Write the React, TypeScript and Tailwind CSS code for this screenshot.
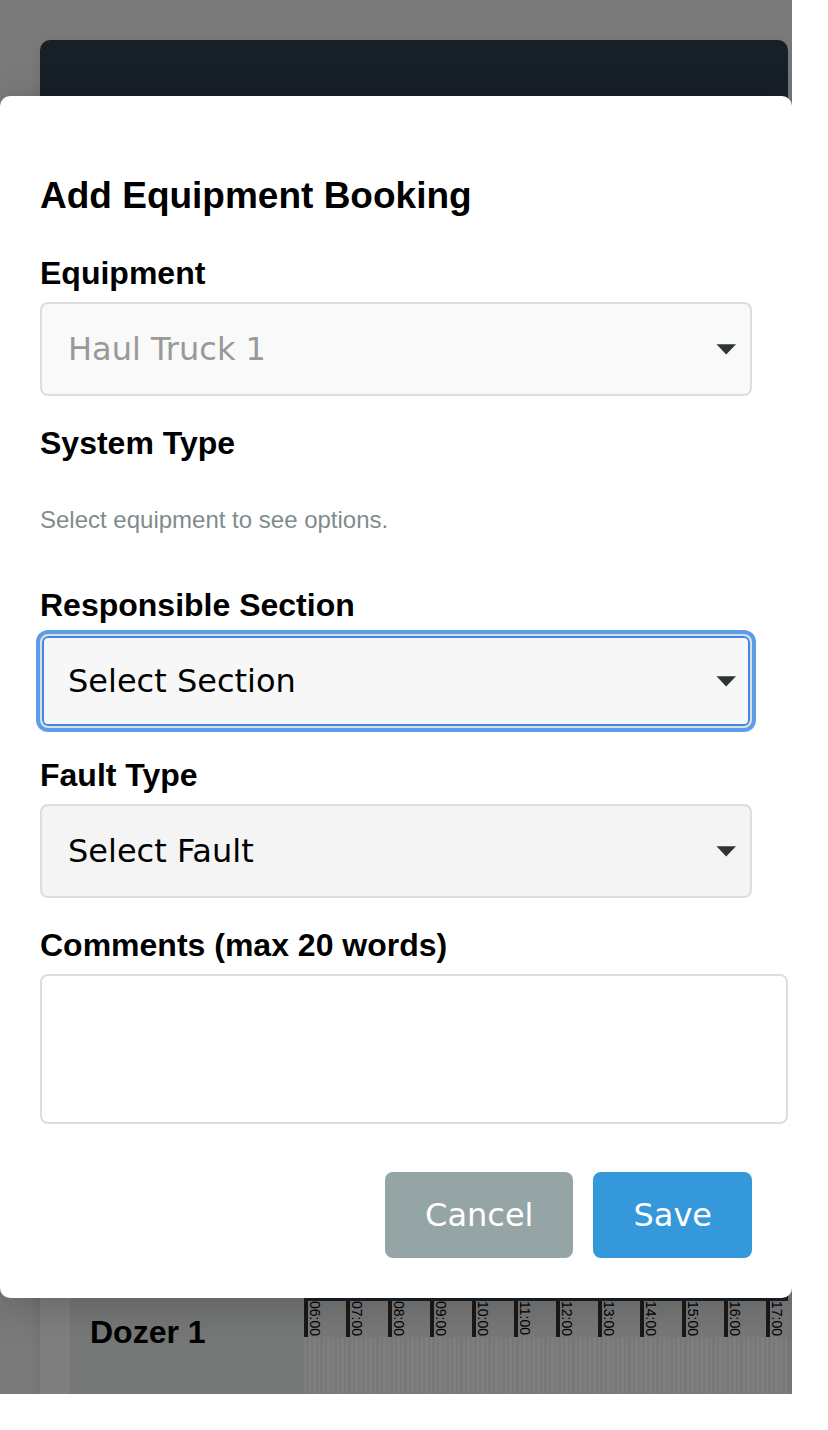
import type { ReactNode } from "react";

const hours = ["06:00", "07:00", "08:00", "09:00", "10:00", "11:00", "12:00", "13:00", "14:00", "15:00", "16:00", "17:00"];

const labelClass = "block text-[32px] leading-[34px] font-bold";

function SelectBox({ id, value, className, disabled }: { id: string; value: string; className: string; disabled?: boolean }) {
  return (
    <div className="relative mt-3">
      <select
        id={id}
        disabled={disabled}
        className={`block h-[94px] w-full appearance-none rounded-lg border-2 border-[#ddd] pl-[26px] font-['DejaVu_Sans',sans-serif] text-[32px] opacity-100 outline-none ${className}`}
      >
        <option>{value}</option>
      </select>
      <svg className="pointer-events-none absolute top-[42px] right-4 h-[11px] w-5" viewBox="0 0 20 11" aria-hidden="true">
        <path d="M0.5 0.2H20L10.2 10.4Z" fill="#2e3436" />
      </svg>
    </div>
  );
}

function Field({ id, label, children }: { id: string; label: string; children: ReactNode }) {
  return (
    <div className="mb-[30px]">
      <label htmlFor={id} className={labelClass}>
        {label}
      </label>
      {children}
    </div>
  );
}

function Schedule() {
  return (
    <div className="flex flex-1 flex-col bg-[#f5f5f5] pt-10 pr-1 pl-10">
      <div className="flex flex-1 flex-col overflow-hidden rounded-t-[10px] bg-white shadow-[0_4px_16px_rgba(0,0,0,0.1)]">
        <header className="h-40 bg-[#2f3e4f]" />
        <div className="mt-auto ml-[30px] flex h-40 overflow-hidden">
          <div className="flex w-[234px] shrink-0 flex-col justify-end bg-[#ecf0f1] pb-11 pl-5">
            <span className="text-[32px] leading-9 font-bold">Dozer 1</span>
          </div>
          <div className="flex min-w-0 flex-1 flex-col">
            <div className="flex-1 bg-[#2c3e50]" />
            <div className="flex h-9 overflow-hidden bg-[#f1f1f1]">
              {hours.map((hour) => (
                <div key={hour} className="w-[42px] shrink-0 border-l-4 border-[#333]">
                  <span className="block text-[14px] leading-[14px] [writing-mode:vertical-rl]">{hour}</span>
                </div>
              ))}
            </div>
            <div className="h-[57px] bg-[repeating-linear-gradient(90deg,#fff_0_2px,#f0f0f0_2px_5px,#fff_5px_7px,#f0f0f0_7px_9px,#fff_9px_12px,#f0f0f0_12px_14px)]" />
          </div>
        </div>
      </div>
    </div>
  );
}

export default function App() {
  return (
    <main className="flex min-h-screen flex-col bg-white pr-9 pb-9 font-['Liberation_Sans',Arial,sans-serif] text-black">
      <div className="relative flex flex-1 flex-col overflow-hidden">
        <Schedule />
        <div className="absolute inset-0 flex items-center bg-black/50">
          <form
            role="dialog"
            aria-labelledby="booking-title"
            onSubmit={(event) => event.preventDefault()}
            className="w-full rounded-[10px] bg-white p-10 shadow-[0_8px_40px_rgba(0,0,0,0.2)]"
          >
            <h3 id="booking-title" className="my-[39px] text-[37px] leading-[42px] font-bold">
              Add Equipment Booking
            </h3>
            <Field id="equipment" label="Equipment">
              <SelectBox id="equipment" value="Haul Truck 1" disabled className="bg-[#f9f9f9] text-[#999]" />
            </Field>
            <div className="mb-[30px]">
              <span className={labelClass}>System Type</span>
              <p className="mt-3 pt-[34px] pb-6 text-[24px] leading-7 text-[#7f8c8d]">Select equipment to see options.</p>
            </div>
            <Field id="section" label="Responsible Section">
              <SelectBox
                id="section"
                value="Select Section"
                className="bg-[#f7f7f7] shadow-[0_0_0_4px_#5c9de9,inset_0_0_0_2px_#3f87e2]"
              />
            </Field>
            <Field id="fault" label="Fault Type">
              <SelectBox id="fault" value="Select Fault" className="bg-[#f4f4f4]" />
            </Field>
            <label htmlFor="comments" className={labelClass}>
              Comments (max 20 words)
            </label>
            <textarea
              id="comments"
              className="mt-3 block h-[150px] w-[calc(100%+36px)] resize-none rounded-lg border-2 border-[#ddd] bg-white p-5 text-[32px] outline-none"
            />
            <div className="mt-12 flex justify-end gap-5 font-['DejaVu_Sans',sans-serif] text-[32px] text-white">
              <button type="button" className="h-[86px] rounded-lg bg-[#95a5a6] px-10">
                Cancel
              </button>
              <button type="submit" className="h-[86px] rounded-lg bg-[#3498db] px-10">
                Save
              </button>
            </div>
          </form>
        </div>
      </div>
    </main>
  );
}
